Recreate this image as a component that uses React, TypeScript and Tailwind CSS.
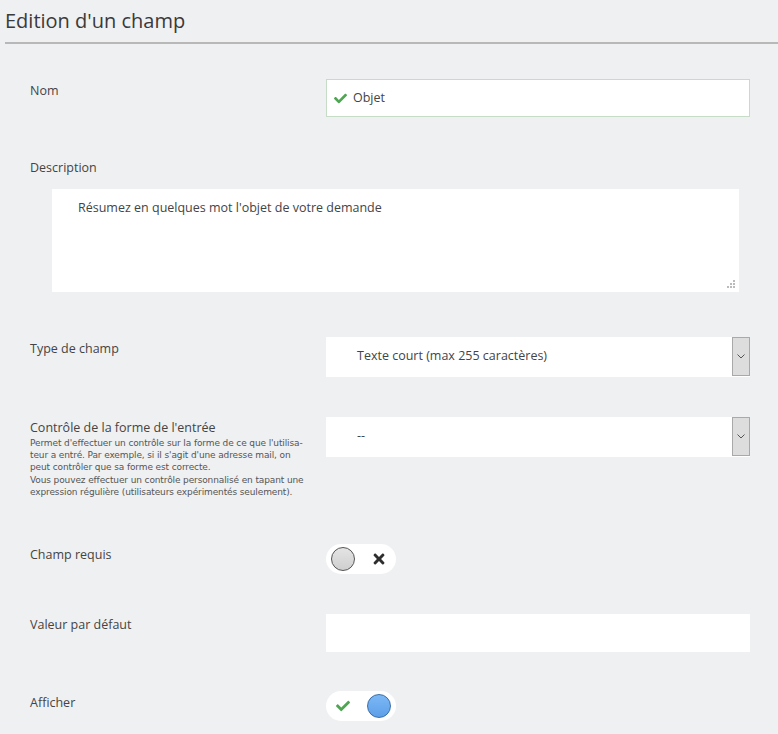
import React from "react";
import { FaCheck, FaTimes } from "react-icons/fa";

const Arrow = () => (
    <div className="w-[18px] h-[39px] bg-[#dddddd] border border-[#a9a9a9] flex items-center justify-center">
        <svg viewBox="0 0 8 5" className="w-[8px] h-[5px]">
            <path d="M0.5 0.5 L4 4 L7.5 0.5" fill="none" stroke="#555" strokeWidth="1" />
        </svg>
    </div>
);

const Label = ({ children }: { children: React.ReactNode }) => (
    <div className="w-[326px] pl-[30px] text-[12.5px] text-[#444]">{children}</div>
);

const help = [
    "Permet d'effectuer un contrôle sur la forme de ce que l'utilisa-",
    "teur a entré. Par exemple, si il s'agit d'une adresse mail, on",
    "peut contrôler que sa forme est correcte.",
    "Vous pouvez effectuer un contrôle personnalisé en tapant une",
    "expression régulière (utilisateurs expérimentés seulement).",
];

export default function App() {
    return (
        <div className="min-h-[734px] bg-[#eff0f2] font-['Open_Sans',sans-serif] text-[#444]">
            <div className="pl-[5px] pt-[6px]">
                <h1 className="text-[20px] leading-[30px] text-[#3a3a3a] pb-[6px] border-b-2 border-[#b8b8b8]">Edition d'un champ</h1>
            </div>

            <div className="flex mt-[35px] items-start">
                <div className="pt-[3px]"><Label>Nom</Label></div>
                <div className="w-[424px] h-[38px] bg-white border border-[#c6dcc6] flex items-center pl-[7px]">
                    <FaCheck className="w-[13px] h-[13px] text-[#4fa552]" />
                    <span className="ml-[6px] text-[12.5px]">Objet</span>
                </div>
            </div>

            <div className="mt-[42px]"><Label>Description</Label></div>
            <div className="ml-[52px] mt-[11px] w-[687px] h-[103px] bg-white relative pl-[26px] pt-[10px] text-[12.5px]">
                Résumez en quelques mot l'objet de votre demande
                <svg viewBox="0 0 8 8" className="absolute right-[4px] bottom-[4px] w-[8px] h-[8px]">
                    <rect x="6" y="0" width="2" height="2" fill="#bbb" />
                    <rect x="3" y="3" width="2" height="2" fill="#bbb" />
                    <rect x="6" y="3" width="2" height="2" fill="#bbb" />
                    <rect x="0" y="6" width="2" height="2" fill="#bbb" />
                    <rect x="3" y="6" width="2" height="2" fill="#bbb" />
                    <rect x="6" y="6" width="2" height="2" fill="#bbb" />
                </svg>
            </div>

            <div className="flex mt-[45px] items-start">
                <div className="pt-[3px]"><Label>Type de champ</Label></div>
                <div className="w-[424px] h-[40px] bg-white flex items-center justify-between pl-[31px] text-[12.5px]">
                    <span>Texte court (max 255 caractères)</span>
                    <Arrow />
                </div>
            </div>

            <div className="flex mt-[40px] items-start">
                <div className="w-[326px] pl-[30px] pt-[2px]">
                    <div className="text-[12.5px] leading-[18px]">Contrôle de la forme de l'entrée</div>
                    <div className="text-[9px] leading-[12.3px] font-['DejaVu_Sans',sans-serif] tracking-[-0.12px] text-[#555]">
                        {help.map(line => (
                            <div key={line} className="whitespace-nowrap">{line}</div>
                        ))}
                    </div>
                </div>
                <div className="w-[424px] h-[40px] bg-white flex items-center justify-between pl-[31px] text-[12.5px]">
                    <span>--</span>
                    <Arrow />
                </div>
            </div>

            <div className="flex mt-[46px] items-start">
                <div className="pt-[2px]"><Label>Champ requis</Label></div>
                <div className="w-[70px] h-[30px] bg-white rounded-full flex items-center justify-between pl-[5px] pr-[10px]">
                    <div className="w-[24px] h-[24px] rounded-full bg-gradient-to-b from-[#e4e4e4] to-[#cfcfcf] border border-[#555]" />
                    <FaTimes className="w-[14px] h-[16px] text-[#2e2e2e]" />
                </div>
            </div>

            <div className="flex mt-[40px] items-start">
                <div className="pt-[2px]"><Label>Valeur par défaut</Label></div>
                <div className="w-[424px] h-[38px] bg-white" />
            </div>

            <div className="flex mt-[39px] items-start">
                <div className="pt-[3px]"><Label>Afficher</Label></div>
                <div className="w-[70px] h-[30px] bg-white rounded-full flex items-center justify-between pl-[10px] pr-[5px]">
                    <FaCheck className="w-[14px] h-[14px] text-[#4fa552]" />
                    <div className="w-[24px] h-[24px] rounded-full bg-gradient-to-b from-[#7cb8f6] to-[#5d9fe8] border border-[#3a6ea8]" />
                </div>
            </div>
        </div>
    );
}
